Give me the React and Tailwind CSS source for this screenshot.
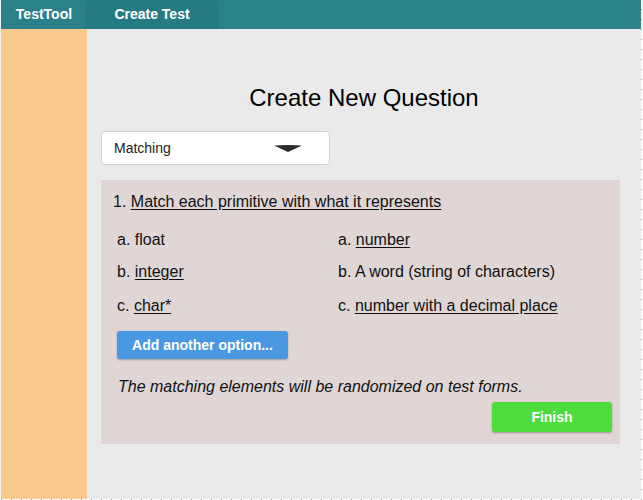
import React from "react";

const left = [
  { k: "a.", t: "float", u: false },
  { k: "b.", t: "integer", u: true },
  { k: "c.", t: "char*", u: true },
];
const right = [
  { k: "a.", t: "number", u: true },
  { k: "b.", t: "A word (string of characters)", u: false },
  { k: "c.", t: "number with a decimal place", u: true },
];
const gaps = ["mt-[18px]", "mt-[12px]", "mt-[14px]"];

const App = () => {
  return (
    <div className="w-[643px] h-[500px] bg-white font-['Liberation_Sans',Arial,sans-serif] text-[#111] overflow-hidden">
      <div className="flex">
        <div className="w-[641px] h-[499px] flex flex-col border-l border-[#f2f2f2]">
          <header className="h-[29px] flex bg-[#2a8189] text-white text-[14px] font-bold">
            <div className="w-[86px] flex items-center justify-center">TestTool</div>
            <div className="w-[130px] flex items-center justify-center bg-[#267b83] shadow-[0_1px_2px_rgba(0,0,0,0.25)] rounded-br-[2px]">
              Create Test
            </div>
          </header>
          <div className="flex flex-1">
            <aside className="w-[86px] bg-[#f9c98e]" />
            <main className="flex-1 bg-[#eaeaea] pl-[14px] pr-[21px]">
              <h1 className="pt-[55px] text-[24px] leading-[28px] text-center text-black -ml-[14px] -mr-[21px]">
                Create New Question
              </h1>
              <div className="mt-[19px] w-[229px] h-[34px] bg-white border border-[#cfcfcf] rounded-[4px] flex items-center justify-between pl-[12px] pr-[27px]">
                <span className="text-[14px] text-[#222]">Matching</span>
                <svg width="28" height="7" viewBox="0 0 28 7">
                  <polygon points="0,0.5 14,0 28,0.5 14,7" fill="#2b2b2b" />
                </svg>
              </div>
              <section className="mt-[15px] bg-[#e0d6d6] pl-[12px] pr-[8px] pt-[12px] pb-[12px] text-[16px] leading-[20px]">
                <p>
                  1. <span className="underline underline-offset-2">Match each primitive with what it represents</span>
                </p>
                {left.map((l, i) => (
                  <div key={l.k} className={`${gaps[i]} flex`}>
                    <div className="w-[225px] pl-[4px]">
                      {l.k} <span className={l.u ? "underline underline-offset-2" : ""}>{l.t}</span>
                    </div>
                    <div>
                      {right[i].k} <span className={right[i].u ? "underline underline-offset-2" : ""}>{right[i].t}</span>
                    </div>
                  </div>
                ))}
                <button className="mt-[15px] ml-[4px] w-[171px] h-[28px] rounded-[3px] bg-[#4a98e2] text-white text-[14px] font-bold shadow-[0_1px_2px_rgba(0,0,0,0.3)]">
                  Add another option...
                </button>
                <p className="mt-[18px] pl-[5px] italic">The matching elements will be randomized on test forms.</p>
                <div className="mt-[5px] flex justify-end">
                  <button className="w-[120px] h-[30px] rounded-[3px] bg-[#4cdc3c] text-white text-[14px] font-bold shadow-[0_1px_2px_rgba(0,0,0,0.3)]">
                    Finish
                  </button>
                </div>
              </section>
            </main>
          </div>
        </div>
        <div className="w-[1px] h-[499px] bg-[repeating-linear-gradient(to_bottom,transparent_0_9px,#999_9px_10px)]" />
      </div>
      <div className="w-[643px] h-[1px] bg-[repeating-linear-gradient(to_right,transparent_0_1px,#999_1px_2px,transparent_2px_10px)]" />
    </div>
  );
};

export default App;
